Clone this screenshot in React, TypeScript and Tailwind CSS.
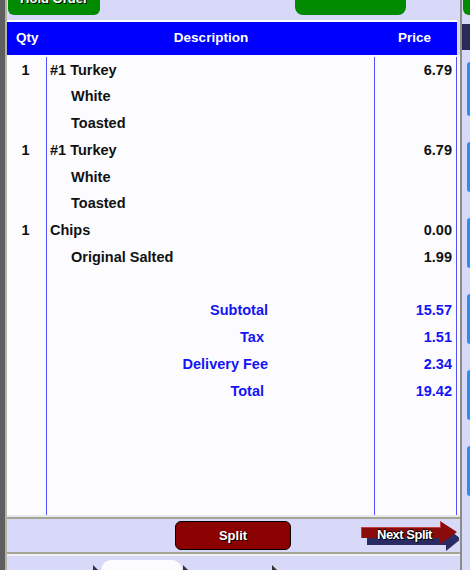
import React from "react";

type Row =
  | { kind: "item"; qty?: string; desc: string; price?: string; indent?: boolean }
  | { kind: "blank" }
  | { kind: "sum"; label: string; value: string; pr?: boolean };

const rows: Row[] = [
  { kind: "item", qty: "1", desc: "#1 Turkey", price: "6.79" },
  { kind: "item", desc: "White", indent: true },
  { kind: "item", desc: "Toasted", indent: true },
  { kind: "item", qty: "1", desc: "#1 Turkey", price: "6.79" },
  { kind: "item", desc: "White", indent: true },
  { kind: "item", desc: "Toasted", indent: true },
  { kind: "item", qty: "1", desc: "Chips", price: "0.00" },
  { kind: "item", desc: "Original Salted", price: "1.99", indent: true },
  { kind: "blank" },
  { kind: "sum", label: "Subtotal", value: "15.57" },
  { kind: "sum", label: "Tax", value: "1.51", pr: true },
  { kind: "sum", label: "Delivery Fee", value: "2.34" },
  { kind: "sum", label: "Total", value: "19.42", pr: true },
];

function TableRow({ row }: { row: Row }) {
  return (
    <div className="flex h-[26.75px] shrink-0 items-center">
      <div className="flex h-full w-[40px] items-center justify-center border-r border-[#5050ff]">
        {row.kind === "item" && row.qty ? <span className="-ml-[2px]">{row.qty}</span> : null}
      </div>
      <div className="flex h-full w-[328px] items-center border-r border-[#5050ff]">
        {row.kind === "item" ? (
          <span className={row.indent ? "pl-[24px]" : "pl-[3px]"}>{row.desc}</span>
        ) : row.kind === "sum" ? (
          <span
            className={
              "block w-[221px] text-right text-[#1414f5] " + (row.pr ? "pr-[4px]" : "pr-0")
            }
          >
            {row.label}
          </span>
        ) : null}
      </div>
      <div className="flex h-full w-[82px] items-center justify-end border-r border-[#5050ff] pr-[4px]">
        {row.kind === "item" && row.price ? <span>{row.price}</span> : null}
        {row.kind === "sum" ? <span className="text-[#1414f5]">{row.value}</span> : null}
      </div>
    </div>
  );
}

function NextSplit() {
  return (
    <div className="relative h-[32px] w-[98px]">
      <svg width="98" height="32" viewBox="0 0 98 32" className="absolute left-0 top-0">
        <polygon points="6,12 85,12 85,6 100,18 85,30 85,24 6,24" fill="#2b2b63" />
        <polygon points="0,6 79,6 79,0 96,11 79,23 79,17 0,17" fill="#8b0a0a" />
        <polygon points="0,6 79,6 79,0 80,1 80,7 1,7 1,17 0,17" fill="#c04040" />
      </svg>
      <span
        className="absolute left-[16px] top-[4px] text-[13px] font-bold tracking-[-0.5px] text-white"
        style={{ textShadow: "1px 1px 0 #000, -1px 0 0 #000, 0 -1px 0 #000" }}
      >
        Next Split
      </span>
    </div>
  );
}

export default function App() {
  return (
    <div
      className="flex h-[570px] w-[470px] overflow-hidden bg-[#d8d8f8] text-[14.5px] font-bold text-[#111]"
      style={{ fontFamily: '"Liberation Sans", Arial, sans-serif' }}
    >
      {/* left dark strip */}
      <div className="w-[5px] shrink-0 bg-[#5e5e5e]" />

      {/* main column */}
      <div className="flex w-[455px] shrink-0 flex-col border-l-2 border-[#b4b4a4]">
        {/* top buttons */}
        <div className="flex h-[20px] shrink-0 items-start bg-[#d8d8f8]">
          <div className="ml-[1px] mt-[-18px] flex h-[33px] w-[92px] items-center justify-center rounded-[6px] bg-[#008a00]">
            <span
              className="text-[13px] font-bold text-white"
              style={{ textShadow: "1px 1px 0 #000" }}
            >
              Hold Order
            </span>
          </div>
          <div className="ml-[195px] mt-[-18px] h-[33px] w-[111px] rounded-[8px] bg-[#008a00]" />
        </div>
        <div className="h-[2px] w-[450px] shrink-0 bg-white" />
        {/* header */}
        <div className="flex h-[33px] w-[450px] shrink-0 items-center bg-[#0000ff] text-[13.5px] text-white">
          <div className="w-[40px] pl-[9px]">Qty</div>
          <div className="w-[328px] text-center">Description</div>
          <div className="w-[82px] pl-[23px]">Price</div>
        </div>
        {/* body */}
        <div className="flex h-[460px] w-[453px] shrink-0 flex-col bg-[#fcfcff] pt-[2px]">
          {rows.map((r, i) => (
            <TableRow key={i} row={r} />
          ))}
          <div className="flex flex-1">
            <div className="w-[40px] border-r border-[#5050ff]" />
            <div className="w-[328px] border-r border-[#5050ff]" />
            <div className="w-[82px] border-r border-[#5050ff]" />
          </div>
        </div>
        {/* separator */}
        <div className="h-[4px] shrink-0 border-t-2 border-b-2 border-t-[#e8e8ee] border-b-[#a4a494]" />
        {/* split bar */}
        <div className="flex h-[33px] shrink-0 items-center bg-[#d8d8f8]">
          <div className="ml-[168px] flex h-[29px] w-[116px] items-center justify-center rounded-[6px] border border-black bg-[#8b0000]">
            <span className="text-[13px] font-bold text-white" style={{ textShadow: "1px 1px 0 #000" }}>
              Split
            </span>
          </div>
          <div className="ml-[70px] mt-[3px]">
            <NextSplit />
          </div>
        </div>
        <div className="h-[4px] shrink-0 border-t-2 border-b-2 border-t-[#a4a494] border-b-[#f0f0f4]" />
        {/* tabs */}
        <div className="relative flex-1 bg-[#d8d8f8]">
          <div className="absolute left-[94px] top-[4px] h-[20px] w-[81px] rounded-t-[10px] bg-[#fcfcff]" />
          <svg className="absolute left-[86px] top-[9px]" width="6" height="6" viewBox="0 0 6 6">
            <polygon points="0,0 6,6 0,6" fill="#333" />
          </svg>
          <svg className="absolute left-[176px] top-[9px]" width="6" height="6" viewBox="0 0 6 6">
            <polygon points="0,0 6,6 0,6" fill="#333" />
          </svg>
          <svg className="absolute left-[265px] top-[9px]" width="6" height="6" viewBox="0 0 6 6">
            <polygon points="0,0 6,6 0,6" fill="#333" />
          </svg>
        </div>
      </div>

      {/* right separator */}
      <div className="w-[2px] shrink-0 bg-[#8c8c86]" />

      {/* right panel */}
      <div className="flex w-[8px] shrink-0 flex-col bg-[#d8d8f8]">
        <div className="ml-[1px] h-[15px] shrink-0 rounded-bl-[6px] bg-[#008a00]" />
        <div className="h-[9px] shrink-0" />
        <div className="h-[26px] shrink-0 bg-[#2b2b5a]" />
        <div className="flex flex-col gap-[26px] pl-[5px] pt-[12px]">
          <div className="h-[54px] rounded-l-[6px] bg-[#2d8fe8]" />
          <div className="h-[50px] rounded-l-[6px] bg-[#2d8fe8]" />
          <div className="h-[50px] rounded-l-[6px] bg-[#2d8fe8]" />
          <div className="h-[50px] rounded-l-[6px] bg-[#2d8fe8]" />
          <div className="h-[50px] rounded-l-[6px] bg-[#2d8fe8]" />
          <div className="h-[50px] rounded-l-[6px] bg-[#2d8fe8]" />
        </div>
      </div>
    </div>
  );
}
